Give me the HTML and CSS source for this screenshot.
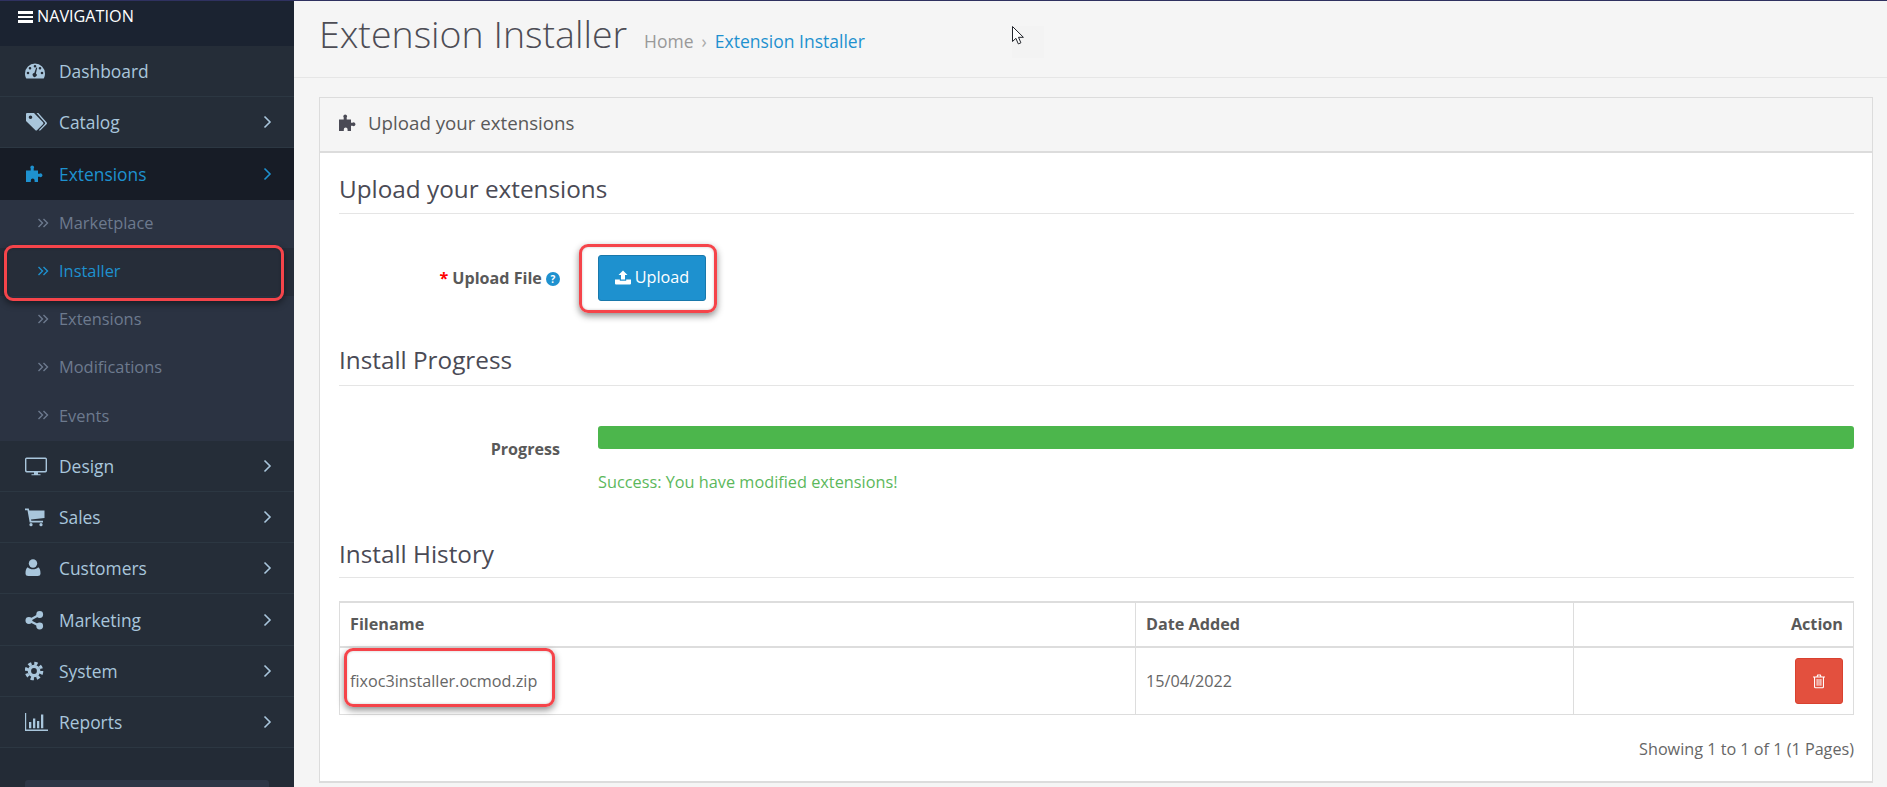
FILE: index.html
```html
<!DOCTYPE html>
<html lang="en">
<head>
<meta charset="utf-8">
<title>Extension Installer</title>
<link rel="stylesheet" href="styles.css">
</head>
<body>
<svg class="defs" aria-hidden="true">
  <symbol id="i-dashboard" viewBox="0 0 20 20"><path fill-rule="evenodd" d="M10 2.500A10 10 0 0 0 0 12.500c0 1.900.5 3.600 1.300 5h17.400c.8-1.400 1.300-3.100 1.300-5a10 10 0 0 0-10-10zM4.300 12a1.300 1.300 0 1 1-2.600 0 1.300 1.300 0 0 1 2.600 0zm2-4.800a1.300 1.300 0 1 1-2.600 0 1.300 1.300 0 0 1 2.600 0zm5-2a1.300 1.300 0 1 1-2.600 0 1.300 1.300 0 0 1 2.600 0zm5 2a1.300 1.300 0 1 1-2.600 0 1.300 1.300 0 0 1 2.600 0zm2 4.800a1.300 1.300 0 1 1-2.600 0 1.300 1.300 0 0 1 2.600 0zM11.200 6.500 9.300 12a2 2 0 1 0 1.600.4l1.300-5.600z"/></symbol>
  <symbol id="i-tags" viewBox="0 0 22 20"><path fill-rule="evenodd" d="M2 1h7l9 9.200a1.400 1.400 0 0 1 0 2L12.200 18a1.400 1.400 0 0 1-2 0L1 9V2a1 1 0 0 1 1-1zm3.500 2.500a1.800 1.800 0 1 0 0 3.600 1.800 1.800 0 0 0 0-3.600z"/><path d="M11.500 1h1.800l8.200 9.200a1.400 1.400 0 0 1 0 2l-6 6a1.400 1.400 0 0 1-1.700.1l6-6.300a1 1 0 0 0 0-1.400z"/></symbol>
  <symbol id="i-puzzle" viewBox="0 0 20 20"><path d="M1 6.500h4.700V4.600a1.900 1.900 0 1 1 3 0v1.900H13v3.300h1.400a1.900 1.900 0 1 1 0 3H13V18H9.600v-1.500a1.900 1.900 0 1 0-3.800 0V18H1z"/></symbol>
  <symbol id="i-desktop" viewBox="0 0 22 20"><path fill-rule="evenodd" d="M2 1.500h18A1.800 1.800 0 0 1 22 3.300v11.400a1.800 1.800 0 0 1-2 1.800h-7v1.700h2.500v1.100h-9v-1.100H9v-1.700H2a1.800 1.800 0 0 1-2-1.800V3.300A1.800 1.800 0 0 1 2 1.500zm-.6 1.500v10.900c0 .7.300 1.100 1 1.100h17.200c.7 0 1-.4 1-1.100V3z"/></symbol>
  <symbol id="i-cart" viewBox="0 0 20 20"><path d="M0 1.500h3.800l.5 2H19.500v7.500L6 12.500l.3 1.300H18v1.700H4.700L2.500 3.200H0z"/><circle cx="6" cy="17.700" r="1.600"/><circle cx="16" cy="17.700" r="1.600"/></symbol>
  <symbol id="i-user" viewBox="0 0 20 20"><circle cx="8" cy="5.500" r="4.200"/><path d="M2.800 9.200C4 10.700 6 11.200 8 11.200s4-.5 5.200-2C15 10 15.500 13 15.500 15.500c0 1.700-1.200 2.500-2.800 2.500H3.300C1.700 18 .5 17.200.5 15.500.5 13 1 10 2.800 9.200z"/></symbol>
  <symbol id="i-share" viewBox="0 0 20 20"><circle cx="14.700" cy="4.500" r="3.400"/><circle cx="3.900" cy="10.500" r="3.400"/><circle cx="14.700" cy="16" r="3.400"/><path d="M3.900 10.500 14.700 4.500M3.900 10.500 14.700 16" stroke="currentColor" stroke-width="2.200" fill="none"/></symbol>
  <symbol id="i-cog" viewBox="0 0 20 20"><circle cx="9" cy="10" r="7.700" fill="none" stroke="currentColor" stroke-width="3.200" stroke-dasharray="3.300 2.750"/><circle cx="9" cy="10" r="4.600" fill="none" stroke="currentColor" stroke-width="3.400"/></symbol>
  <symbol id="i-chart" viewBox="0 0 24 20"><path d="M0 1h1.200v16.500H23V19H0z"/><path d="M4 10h2.300v6.200H4zM8 6.500h2.300v9.700H8zM12 9h2.300v7.200H12zM16 2.500h2.300v13.700H16z"/></symbol>
  <symbol id="i-upload" viewBox="0 0 16 16"><path d="M8 1.500 12.500 6H10v4.500H6V6H3.500z"/><path d="M0 10.500h4.800v1.200h6.400v-1.200H16v4a1 1 0 0 1-1 1H1a1 1 0 0 1-1-1z"/></symbol>
  <symbol id="i-trash" viewBox="0 0 14 16"><path fill-rule="evenodd" d="M1 3.500h3.500l.8-2h3.400l.8 2H13v1h-1v9.300a1.500 1.500 0 0 1-1.500 1.500h-7A1.500 1.500 0 0 1 2 13.800V4.500H1zM5.700 3.500h2.600l-.4-1H6.100zM3.100 4.500v9.300c0 .3.200.4.400.4h7c.2 0 .4-.1.400-.4V4.500z"/><path d="M4.600 6h1v6.800h-1zM6.500 6h1v6.800h-1zM8.400 6h1v6.800h-1z"/></symbol>
  <symbol id="i-angle" viewBox="0 0 10 14"><path d="M2.500 1.500 8 7l-5.500 5.500" fill="none" stroke="currentColor" stroke-width="1.600"/></symbol>
  <symbol id="i-dangle" viewBox="0 0 12 12"><path d="M1.500 2 5.500 6l-4 4M6.500 2l4 4-4 4" fill="none" stroke="currentColor" stroke-width="1.400"/></symbol>
</svg>

<div class="topline"></div>
<div class="layout">
  <aside class="sidebar">
    <div class="nav-head"><span class="bars"><i></i><i></i><i></i></span>NAVIGATION</div>
    <ul class="menu">
      <li class="item"><svg class="ico"><use href="#i-dashboard"/></svg><span class="lbl">Dashboard</span></li>
      <li class="item"><svg class="ico ico-wide"><use href="#i-tags"/></svg><span class="lbl">Catalog</span><svg class="chev"><use href="#i-angle"/></svg></li>
      <li class="item active"><svg class="ico"><use href="#i-puzzle"/></svg><span class="lbl">Extensions</span><svg class="chev"><use href="#i-angle"/></svg></li>
      <li class="subwrap">
        <ul class="sub">
          <li class="subitem"><svg class="dchev"><use href="#i-dangle"/></svg>Marketplace</li>
          <li class="subitem current"><svg class="dchev"><use href="#i-dangle"/></svg>Installer</li>
          <li class="subitem"><svg class="dchev"><use href="#i-dangle"/></svg>Extensions</li>
          <li class="subitem"><svg class="dchev"><use href="#i-dangle"/></svg>Modifications</li>
          <li class="subitem"><svg class="dchev"><use href="#i-dangle"/></svg>Events</li>
        </ul>
      </li>
      <li class="item"><svg class="ico ico-wide"><use href="#i-desktop"/></svg><span class="lbl">Design</span><svg class="chev"><use href="#i-angle"/></svg></li>
      <li class="item"><svg class="ico"><use href="#i-cart"/></svg><span class="lbl">Sales</span><svg class="chev"><use href="#i-angle"/></svg></li>
      <li class="item"><svg class="ico"><use href="#i-user"/></svg><span class="lbl">Customers</span><svg class="chev"><use href="#i-angle"/></svg></li>
      <li class="item"><svg class="ico"><use href="#i-share"/></svg><span class="lbl">Marketing</span><svg class="chev"><use href="#i-angle"/></svg></li>
      <li class="item"><svg class="ico"><use href="#i-cog"/></svg><span class="lbl">System</span><svg class="chev"><use href="#i-angle"/></svg></li>
      <li class="item"><svg class="ico ico-wider"><use href="#i-chart"/></svg><span class="lbl">Reports</span><svg class="chev"><use href="#i-angle"/></svg></li>
    </ul>
    <div class="stats-box"></div>
  </aside>

  <main class="main">
    <header class="page-head">
      <h1 class="title">Extension Installer</h1>
      <nav class="crumbs"><span class="crumb">Home</span><span class="sep">›</span><span class="crumb-link">Extension Installer</span></nav>
    </header>

    <section class="panel">
      <div class="panel-head"><svg class="panel-ico"><use href="#i-puzzle"/></svg>Upload your extensions</div>
      <div class="panel-body">
        <h2 class="legend">Upload your extensions</h2>
        <div class="form-row row-upload">
          <div class="label"><span class="req">*</span> Upload File <span class="help">?</span></div>
          <div class="field"><button class="btn-upload" type="button"><svg class="btn-ico"><use href="#i-upload"/></svg>Upload</button></div>
        </div>

        <h2 class="legend legend-progress">Install Progress</h2>
        <div class="form-row row-progress">
          <div class="label">Progress</div>
          <div class="field">
            <div class="bar"></div>
            <div class="success">Success: You have modified extensions!</div>
          </div>
        </div>

        <h2 class="legend legend-history">Install History</h2>
        <table class="history">
          <colgroup><col class="c1"><col class="c2"><col class="c3"></colgroup>
          <thead>
            <tr><th>Filename</th><th>Date Added</th><th class="right">Action</th></tr>
          </thead>
          <tbody>
            <tr>
              <td>fixoc3installer.ocmod.zip</td>
              <td>15/04/2022</td>
              <td class="right"><button class="btn-del" type="button"><svg class="del-ico"><use href="#i-trash"/></svg></button></td>
            </tr>
          </tbody>
        </table>
        <div class="pager-info">Showing 1 to 1 of 1 (1 Pages)</div>
      </div>
    </section>
  </main>
</div>

<div class="mark mark-installer"></div>
<div class="mark mark-upload"></div>
<div class="mark mark-file"></div>
<div class="cursor">
  <svg width="13" height="20" viewBox="0 0 13 20"><path d="M.5.5v15l3.400-3.200 2.400 5.600 2.600-1.100-2.400-5.500h4.900z" fill="#fff" stroke="#22252b" stroke-width="1"/></svg>
</div>
</body>
</html>
```

FILE: styles.css
```css
* { box-sizing: border-box; }
html, body { margin: 0; padding: 0; height: 787px; overflow: hidden; }
body {
  position: relative;
  font-family: "Open Sans", "Noto Sans", sans-serif;
  font-size: 16px;
  color: #595959;
  background: #f5f5f5;
}
.defs { position: absolute; width: 0; height: 0; }
.topline { height: 1px; background: #2f3160; }
.layout { display: flex; height: 786px; }

/* Sidebar */
.sidebar { width: 294px; flex: none; background: #232b36; overflow: hidden; }
.nav-head {
  height: 45.100px;
  padding: 0 0 0 18px;
  display: flex;
  align-items: flex-start;
  gap: 4px;
  line-height: 30px;
  font-size: 16.200px;
  color: #fff;
  background: #1b2331;
}
.bars { width: 15px; display: flex; flex-direction: column; gap: 2px; margin-top: 10px; }
.bars i { display: block; height: 2.500px; background: #fff; }
.menu, .sub { list-style: none; margin: 0; padding: 0; }
.item {
  height: 51.200px;
  display: flex;
  align-items: center;
  padding-left: 25px;
  border-bottom: 1px solid #2c3742;
  background: #252d38;
  color: #a9c6dc;
  font-size: 17.400px;
}
.ico { width: 20px; height: 20px; fill: currentColor; flex: none; margin-right: 14px; }
.ico-wide { width: 22px; margin-right: 12px; }
.ico-wider { width: 24px; margin-right: 10px; }
.lbl { flex: 1; }
.chev { width: 10px; height: 14px; flex: none; margin-right: 22px; }
.item.active { background: #171c26; color: #1e91cf; border-bottom-color: #171c26; }
.subwrap { background: #2b3342; padding-bottom: .8px; }
.subitem {
  height: 48.100px;
  display: flex;
  align-items: center;
  padding: 0 0 2px 37px;
  color: #6d7a8e;
  font-size: 16.400px;
}
.subitem.current { color: #1e91cf; background: #262d39; }
.dchev { width: 12px; height: 12px; margin-right: 10px; flex: none; }
.stats-box { height: 30px; margin: 32px 25px 0; background: #2d3646; border-radius: 3px 3px 0 0; }

/* Main */
.main { flex: 1; min-width: 0; padding: 0 14px 0 25px; }
.page-head {
  height: 77px;
  margin: 0 -14px 0 -25px;
  padding: 0 0 0 25px;
  display: flex;
  align-items: baseline;
  border-bottom: 1px solid #e6e6e6;
}
.title {
  margin: 0;
  font-size: 37.500px;
  font-weight: 300;
  line-height: 66px;
  color: #4d4d55;
}
.crumbs { margin-left: 17px; font-size: 17.500px; display: flex; align-items: baseline; }
.crumb { color: #999; }
.sep { color: #aaa; margin: 0 8px; }
.crumb-link { color: #1e91cf; }

.panel { margin-top: 19px; border: 1px solid #dcdcdc; border-width: 1px 1px 2px 1px; background: #fff; }
.panel-head {
  height: 55px;
  display: flex;
  align-items: center;
  padding: 0 0 4px 18px;
  background: #f5f5f5;
  border-bottom: 2px solid #dcdcdc;
  font-size: 18.700px;
  color: #595959;
}
.panel-ico { width: 20px; height: 20px; fill: #4a4a55; margin-right: 10px; }
.panel-body { padding: 19px 18px 21px 19px; }
.legend {
  margin: 0;
  padding-bottom: 7px;
  font-size: 24.300px;
  font-weight: 400;
  line-height: 34px;
  color: #4a4a55;
  border-bottom: 1px solid #e5e5e5;
}
.legend-progress { margin-top: 42px; padding-bottom: 8px; }
.legend-history { margin-top: 44px; padding-bottom: 6px; }
.form-row { display: grid; grid-template-columns: 222px 1fr; column-gap: 37px; }
.row-upload { margin-top: 41px; }
.row-progress { margin-top: 40px; }
.label { padding-right: 1px; text-align: right; font-weight: 700; font-size: 16.100px; line-height: 46px; color: #595959; white-space: nowrap; }
.req { color: #f00; }
.help {
  display: inline-block;
  width: 14px; height: 14px;
  border-radius: 50%;
  background: #1e91cf;
  color: #fff;
  font-size: 10px;
  line-height: 14px;
  text-align: center;
  vertical-align: 1px;
}
.btn-upload {
  width: 108px; height: 46px;
  display: inline-flex;
  align-items: center;
  justify-content: center;
  gap: 4px;
  border: 1px solid #1978ab;
  border-radius: 3px;
  background: #1e91cf;
  color: #fff;
  font: 400 16.200px/44px "Open Sans", sans-serif;
  padding: 0 0 2px;
}
.btn-ico { width: 16px; height: 16px; fill: #fff; }
.bar { height: 23px; border-radius: 3px; background: #4cb64c; }
.success { margin-top: 22px; line-height: 22px; font-size: 16.300px; color: #5cb85c; }

.history { width: 100%; margin-top: 23px; border-collapse: collapse; table-layout: fixed; }
.c1 { width: 796px; }
.c2 { width: 438px; }
.history th, .history td { border: 1px solid #ddd; padding: 0 10px; text-align: left; font-size: 16.200px; }
.history th { height: 45px; padding-bottom: 2px; border-bottom-width: 2px; border-top-width: 2px; font-weight: 700; color: #595959; }
.history td { height: 67px; color: #666; }
.history .right { text-align: right; }
.btn-del {
  width: 48px; height: 46px;
  display: inline-flex;
  align-items: center;
  justify-content: center;
  vertical-align: middle;
  padding: 0;
  border: 1px solid #d9412f;
  border-radius: 3px;
  background: #e3503e;
}
.del-ico { width: 14px; height: 16px; fill: #fff; }
.pager-info { margin-top: 23px; text-align: right; line-height: 22px; font-size: 16.200px; color: #666; }

/* Annotation overlays */
.mark { position: absolute; border: 3px solid #f5444a; border-radius: 9px; box-shadow: 0 3px 7px rgba(0,0,0,.45), inset 0 0 3px rgba(0,0,0,.2); }
.mark-installer { left: 4px; top: 245px; width: 280px; height: 56px; }
.mark-upload { left: 579px; top: 244px; width: 138px; height: 69px; }
.mark-file { left: 344px; top: 648px; width: 211px; height: 59px; }
.cursor { position: absolute; left: 1012px; top: 26px; width: 32px; height: 32px; background: #f3f3f3; }
.cursor svg { display: block; }
```
